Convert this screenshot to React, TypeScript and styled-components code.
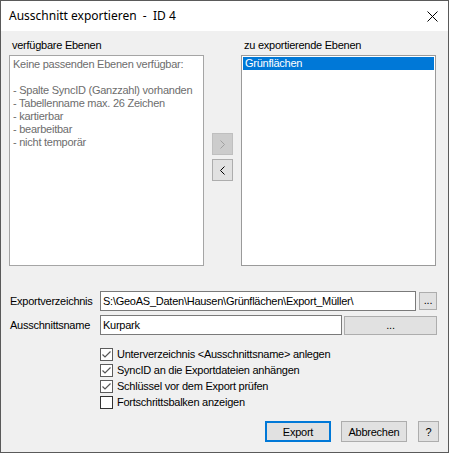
import React from "react";
import styled, { createGlobalStyle, css } from "styled-components";

const Global = createGlobalStyle`
  html, body { margin: 0; padding: 0; background: #f0f0f0; }
  body { font-family: "Liberation Sans", Arial, sans-serif; font-size: 11px; letter-spacing: -0.25px; color: #000; }
  * { box-sizing: border-box; }
  button { letter-spacing: -0.25px; }
`;

const Window = styled.div`
  width: 449px;
  height: 453px;
  border: 1px solid #5a5a5a;
  display: flex;
  flex-direction: column;
  background: #f0f0f0;
`;

const TitleBar = styled.div`
  height: 30px;
  flex: none;
  background: #fff;
  display: flex;
  align-items: center;
  justify-content: space-between;
  padding: 0 10px 0 8px;
`;

const Title = styled.span`
  font-family: "Noto Sans", "Open Sans", sans-serif;
  font-size: 12px;
  letter-spacing: 0;
  white-space: pre;
  color: #000;
  margin-top: -1px;
`;

const Body = styled.div`
  flex: 1;
  display: flex;
  flex-direction: column;
  padding: 8px 9px 0 8px;
`;

const ListsGrid = styled.div`
  display: grid;
  grid-template-columns: 195px 37px 195px;
  grid-template-rows: 13px 211px;
  row-gap: 3px;
`;

const ListLabel = styled.div<{ $col: number }>`
  grid-column: ${(p) => p.$col};
  grid-row: 1;
  line-height: 13px;
  padding-left: 3px;
  white-space: nowrap;
`;

const ListBox = styled.div<{ $disabled?: boolean; $col: number }>`
  grid-column: ${(p) => p.$col};
  grid-row: 2;
  background: #fff;
  border: 1px solid ${(p) => (p.$disabled ? "#a5a5a5" : "#9a9a9a")};
  padding: ${(p) => (p.$disabled ? "2px 3px" : "1px")};
  color: ${(p) => (p.$disabled ? "#6d6d6d" : "#000")};
  line-height: 13px;
  overflow: hidden;
`;

const ListLine = styled.div`
  height: 13px;
  white-space: nowrap;
`;

const ListItem = styled.div<{ $selected?: boolean }>`
  height: 13px;
  line-height: 13px;
  padding-left: 2px;
  white-space: nowrap;
  ${(p) =>
    p.$selected &&
    css`
      background: #0078d7;
      color: #fff;
    `}
`;

const MoveColumn = styled.div`
  grid-column: 2;
  grid-row: 2;
  display: flex;
  flex-direction: column;
  align-items: center;
  padding-top: 78px;
  gap: 4px;
`;

const ArrowButton = styled.button<{ $disabled?: boolean }>`
  width: 21px;
  height: 22px;
  padding: 0;
  margin: 0;
  display: flex;
  align-items: center;
  justify-content: center;
  background: ${(p) => (p.$disabled ? "#cccccc" : "#e1e1e1")};
  border: 1px solid ${(p) => (p.$disabled ? "#bfbfbf" : "#adadad")};
  color: ${(p) => (p.$disabled ? "#a0a0a0" : "#000")};
  border-radius: 0;
  outline: none;
`;

const Form = styled.div`
  margin-top: 25px;
  margin-left: 1px;
  display: flex;
  flex-direction: column;
  gap: 4px;
`;

const FormRow = styled.div`
  display: flex;
  align-items: center;
  height: 20px;
`;

const FieldLabel = styled.label`
  width: 90px;
  flex: none;
  white-space: nowrap;
  line-height: 13px;
`;

const TextInput = styled.div<{ $width: number }>`
  width: ${(p) => p.$width}px;
  height: 20px;
  flex: none;
  background: #fff;
  border: 1px solid #7a7a7a;
  padding: 0 2px;
  line-height: 18px;
  white-space: nowrap;
  overflow: hidden;
`;

const BrowseButton = styled.button<{ $width: number; $height: number; $gap: number }>`
  width: ${(p) => p.$width}px;
  height: ${(p) => p.$height}px;
  margin: 0 0 0 ${(p) => p.$gap}px;
  padding: 0;
  flex: none;
  background: #e1e1e1;
  border: 1px solid #adadad;
  border-radius: 0;
  font-family: "Liberation Sans", Arial, sans-serif;
  font-size: 11px;
  color: #000;
  line-height: 14px;
  display: flex;
  align-items: flex-end;
  justify-content: center;
  padding-bottom: 2px;
`;

const Checks = styled.div`
  margin-top: 11px;
  padding-left: 91px;
  display: flex;
  flex-direction: column;
`;

const CheckRow = styled.div`
  height: 16px;
  display: flex;
  align-items: center;
  gap: 4px;
  white-space: nowrap;
`;

const CheckBox = styled.span<{ $checked?: boolean }>`
  width: 13px;
  height: 13px;
  flex: none;
  background: #fff;
  border: 1px solid ${(p) => (p.$checked ? "#5c5c5c" : "#333")};
  display: flex;
  align-items: center;
  justify-content: center;
`;

const ButtonBar = styled.div`
  margin-top: 11px;
  display: flex;
  justify-content: flex-end;
`;

const DialogButton = styled.button<{ $default?: boolean; $width: number; $gap?: number }>`
  width: ${(p) => p.$width}px;
  height: 21px;
  margin: 0 0 0 ${(p) => p.$gap ?? 0}px;
  padding: 0;
  background: #e1e1e1;
  border: ${(p) => (p.$default ? "2px solid #0078d7" : "1px solid #adadad")};
  border-radius: 0;
  font-family: "Liberation Sans", Arial, sans-serif;
  font-size: 11px;
  color: #000;
  outline: none;
`;

const Chevron = ({ dir }: { dir: "left" | "right" }) => (
  <svg width="5" height="9" viewBox="0 0 5 9">
    <polyline
      points={dir === "right" ? "0.5,0.5 4.5,4.5 0.5,8.5" : "4.5,0.5 0.5,4.5 4.5,8.5"}
      fill="none"
      stroke="currentColor"
      strokeWidth="1"
    />
  </svg>
);

const CheckMark = () => (
  <svg width="11" height="11" viewBox="0 0 11 11">
    <polyline points="1.5,5.5 4,8 9.5,2.5" fill="none" stroke="#555" strokeWidth="1.2" />
  </svg>
);

const CloseIcon = () => (
  <svg width="11" height="11" viewBox="0 0 11 11">
    <path d="M0.5 0.5 L10.5 10.5 M10.5 0.5 L0.5 10.5" stroke="#000" strokeWidth="1" fill="none" />
  </svg>
);

const hints = [
  "Keine passenden Ebenen verfügbar:",
  "",
  "- Spalte SyncID (Ganzzahl) vorhanden",
  "- Tabellenname max. 26 Zeichen",
  "- kartierbar",
  "- bearbeitbar",
  "- nicht temporär",
];

const options = [
  { label: "Unterverzeichnis <Ausschnittsname> anlegen", checked: true },
  { label: "SyncID an die Exportdateien anhängen", checked: true },
  { label: "Schlüssel vor dem Export prüfen", checked: true },
  { label: "Fortschrittsbalken anzeigen", checked: false },
];

export default function App() {
  return (
    <>
      <Global />
      <Window>
        <TitleBar>
          <Title>{"Ausschnitt exportieren  -  ID 4"}</Title>
          <CloseIcon />
        </TitleBar>
        <Body>
          <ListsGrid>
            <ListLabel $col={1}>verfügbare Ebenen</ListLabel>
            <ListLabel $col={3}>zu exportierende Ebenen</ListLabel>
            <ListBox $col={1} $disabled>
              {hints.map((h, i) => (
                <ListLine key={i}>{h || "\u00a0"}</ListLine>
              ))}
            </ListBox>
            <MoveColumn>
              <ArrowButton $disabled>
                <Chevron dir="right" />
              </ArrowButton>
              <ArrowButton>
                <Chevron dir="left" />
              </ArrowButton>
            </MoveColumn>
            <ListBox $col={3}>
              <ListItem $selected>Grünflächen</ListItem>
            </ListBox>
          </ListsGrid>

          <Form>
            <FormRow>
              <FieldLabel>Exportverzeichnis</FieldLabel>
              <TextInput $width={316}>S:\GeoAS_Daten\Hausen\Grünflächen\Export_Müller\</TextInput>
              <BrowseButton $width={18} $height={18} $gap={3}>...</BrowseButton>
            </FormRow>
            <FormRow>
              <FieldLabel>Ausschnittsname</FieldLabel>
              <TextInput $width={242}>Kurpark</TextInput>
              <BrowseButton $width={93} $height={19} $gap={2}>...</BrowseButton>
            </FormRow>
          </Form>

          <Checks>
            {options.map((o) => (
              <CheckRow key={o.label}>
                <CheckBox $checked={o.checked}>{o.checked && <CheckMark />}</CheckBox>
                <span>{o.label}</span>
              </CheckRow>
            ))}
          </Checks>

          <ButtonBar>
            <DialogButton $default $width={66}>Export</DialogButton>
            <DialogButton $width={66} $gap={10}>Abbrechen</DialogButton>
            <DialogButton $width={21} $gap={11}>?</DialogButton>
          </ButtonBar>
        </Body>
      </Window>
    </>
  );
}
